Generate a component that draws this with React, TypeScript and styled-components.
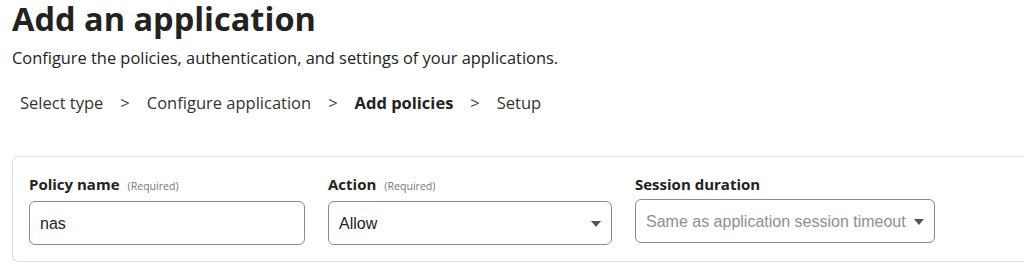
import React from "react";
import styled, { createGlobalStyle } from "styled-components";

const Global = createGlobalStyle`
  html, body { margin: 0; padding: 0; background: #fff; }
  body { font-family: "Open Sans", "Noto Sans", sans-serif; color: #222; }
`;

const Page = styled.div`
  padding: 0 0 0 12px;
  width: 1100px;
`;

const Title = styled.h1`
  margin: 0;
  font-size: 32.5px;
  line-height: 38px;
  font-weight: 700;
  color: #222;
`;

const Subtitle = styled.p`
  margin: 10px 0 0;
  font-size: 16.4px;
  line-height: 20px;
  color: #222;
`;

const Crumbs = styled.nav`
  display: flex;
  align-items: center;
  margin: 24px 0 0 8px;
  font-size: 16.5px;
  line-height: 22px;
  color: #333;
`;

const Crumb = styled.span<{ $active?: boolean }>`
  font-weight: ${(p) => (p.$active ? 700 : 400)};
  color: ${(p) => (p.$active ? "#222" : "#333")};
`;

const Sep = styled.span`
  margin: 0 17px;
  color: #444;
`;

const Card = styled.section`
  margin-top: 42px;
  border: 1px solid #e0e0e0;
  border-right: none;
  border-radius: 6px 0 0 6px;
  padding: 16px 0 16px 16px;
  display: flex;
  gap: 23px;
`;

const Field = styled.div<{ $w: number }>`
  width: ${(p) => p.$w}px;
  display: flex;
  flex-direction: column;
  gap: 4px;
`;

const Label = styled.label`
  font-size: 15px;
  line-height: 22px;
  font-weight: 700;
  color: #222;
`;

const Req = styled.span`
  margin-left: 8px;
  font-size: 10.6px;
  font-weight: 400;
  color: #777;
`;

const Box = styled.div<{ $placeholder?: boolean }>`
  box-sizing: border-box;
  height: 44px;
  border: 1px solid #8a8a8a;
  border-radius: 6px;
  padding: 1px 10px 0;
  display: flex;
  align-items: center;
  justify-content: space-between;
  font-family: "Liberation Sans", Arial, sans-serif;
  font-size: 16px;
  color: ${(p) => (p.$placeholder ? "#8f8f8f" : "#222")};
`;

const Caret = styled.svg`
  flex: none;
`;

const Arrow = () => (
  <Caret width="10" height="6" viewBox="0 0 10 6">
    <path d="M0 0h10L5 6z" fill="#555" />
  </Caret>
);

export default function App() {
  return (
    <Page>
      <Global />
      <Title>Add an application</Title>
      <Subtitle>Configure the policies, authentication, and settings of your applications.</Subtitle>
      <Crumbs>
        <Crumb>Select type</Crumb>
        <Sep>&gt;</Sep>
        <Crumb>Configure application</Crumb>
        <Sep>&gt;</Sep>
        <Crumb $active>Add policies</Crumb>
        <Sep>&gt;</Sep>
        <Crumb>Setup</Crumb>
      </Crumbs>
      <Card>
        <Field $w={276}>
          <Label>
            Policy name<Req>(Required)</Req>
          </Label>
          <Box>nas</Box>
        </Field>
        <Field $w={284}>
          <Label>
            Action<Req>(Required)</Req>
          </Label>
          <Box>
            Allow
            <Arrow />
          </Box>
        </Field>
        <Field $w={300}>
          <Label>Session duration</Label>
          <Box $placeholder>
            Same as application session timeout
            <Arrow />
          </Box>
        </Field>
      </Card>
    </Page>
  );
}
